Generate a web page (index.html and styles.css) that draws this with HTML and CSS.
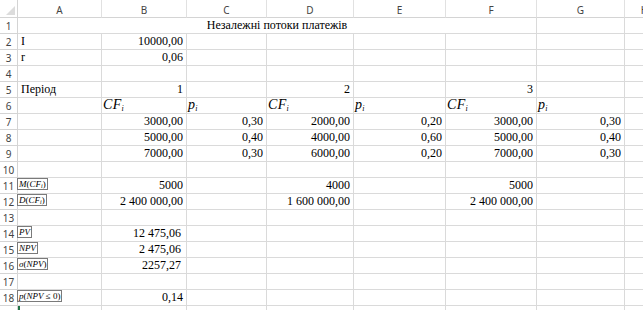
FILE: index.html
```html
<!DOCTYPE html>
<html lang="uk">
<head>
<meta charset="utf-8">
<title>Незалежні потоки платежів</title>
<link rel="stylesheet" href="styles.css">
</head>
<body>
<div class="sheet">
  <div class="hd corner"><span class="tri"></span></div>
  <div class="hd col">A</div><div class="hd col">B</div><div class="hd col">C</div><div class="hd col">D</div><div class="hd col">E</div><div class="hd col">F</div><div class="hd col">G</div><div class="hd col last">H</div>

  <div class="hd rn">1</div>
  <div class="c title">Незалежні потоки платежів</div><div class="c"></div><div class="c"></div>

  <div class="hd rn">2</div>
  <div class="c">I</div><div class="c n">10000,00</div><div class="c"></div><div class="c"></div><div class="c"></div><div class="c"></div><div class="c"></div><div class="c"></div>

  <div class="hd rn">3</div>
  <div class="c">r</div><div class="c n">0,06</div><div class="c"></div><div class="c"></div><div class="c"></div><div class="c"></div><div class="c"></div><div class="c"></div>

  <div class="hd rn">4</div>
  <div class="c"></div><div class="c"></div><div class="c"></div><div class="c"></div><div class="c"></div><div class="c"></div><div class="c"></div><div class="c"></div>

  <div class="hd rn">5</div>
  <div class="c">Період</div><div class="c n">1</div><div class="c"></div><div class="c n">2</div><div class="c"></div><div class="c n">3</div><div class="c"></div><div class="c"></div>

  <div class="hd rn">6</div>
  <div class="c"></div>
  <div class="c m"><i>CF</i><sub>i</sub></div><div class="c m"><i>p</i><sub>i</sub></div>
  <div class="c m"><i>CF</i><sub>i</sub></div><div class="c m"><i>p</i><sub>i</sub></div>
  <div class="c m"><i>CF</i><sub>i</sub></div><div class="c m"><i>p</i><sub>i</sub></div>
  <div class="c"></div>

  <div class="hd rn">7</div>
  <div class="c"></div><div class="c n">3000,00</div><div class="c n">0,30</div><div class="c n">2000,00</div><div class="c n">0,20</div><div class="c n">3000,00</div><div class="c n">0,30</div><div class="c"></div>

  <div class="hd rn">8</div>
  <div class="c"></div><div class="c n">5000,00</div><div class="c n">0,40</div><div class="c n">4000,00</div><div class="c n">0,60</div><div class="c n">5000,00</div><div class="c n">0,40</div><div class="c"></div>

  <div class="hd rn">9</div>
  <div class="c"></div><div class="c n">7000,00</div><div class="c n">0,30</div><div class="c n">6000,00</div><div class="c n">0,20</div><div class="c n">7000,00</div><div class="c n">0,30</div><div class="c"></div>

  <div class="hd rn">10</div>
  <div class="c"></div><div class="c"></div><div class="c"></div><div class="c"></div><div class="c"></div><div class="c"></div><div class="c"></div><div class="c"></div>

  <div class="hd rn">11</div>
  <div class="c f"><span class="box"><i>M</i>(<i>CF</i><sub>i</sub>)</span></div><div class="c n">5000</div><div class="c"></div><div class="c n">4000</div><div class="c"></div><div class="c n">5000</div><div class="c"></div><div class="c"></div>

  <div class="hd rn">12</div>
  <div class="c f"><span class="box"><i>D</i>(<i>CF</i><sub>i</sub>)</span></div><div class="c n">2 400 000,00</div><div class="c"></div><div class="c n">1 600 000,00</div><div class="c"></div><div class="c n">2 400 000,00</div><div class="c"></div><div class="c"></div>

  <div class="hd rn">13</div>
  <div class="c"></div><div class="c"></div><div class="c"></div><div class="c"></div><div class="c"></div><div class="c"></div><div class="c"></div><div class="c"></div>

  <div class="hd rn">14</div>
  <div class="c f"><span class="box"><i>PV</i></span></div><div class="c n sp">12 475,06</div><div class="c"></div><div class="c"></div><div class="c"></div><div class="c"></div><div class="c"></div><div class="c"></div>

  <div class="hd rn">15</div>
  <div class="c f"><span class="box"><i>NPV</i></span></div><div class="c n sp">2 475,06</div><div class="c"></div><div class="c"></div><div class="c"></div><div class="c"></div><div class="c"></div><div class="c"></div>

  <div class="hd rn">16</div>
  <div class="c f"><span class="box"><i>σ</i>(<i>NPV</i>)</span></div><div class="c n sp">2257,27</div><div class="c"></div><div class="c"></div><div class="c"></div><div class="c"></div><div class="c"></div><div class="c"></div>

  <div class="hd rn">17</div>
  <div class="c"></div><div class="c"></div><div class="c"></div><div class="c"></div><div class="c"></div><div class="c"></div><div class="c"></div><div class="c"></div>

  <div class="hd rn">18</div>
  <div class="c f"><span class="box"><i>p</i>(<i>NPV</i> ≤ 0)</span></div><div class="c n">0,14</div><div class="c"></div><div class="c"></div><div class="c"></div><div class="c"></div><div class="c"></div><div class="c"></div>

  <div class="hd rn"></div>
  <div class="c sel"></div><div class="c"></div><div class="c"></div><div class="c"></div><div class="c"></div><div class="c"></div><div class="c"></div><div class="c"></div>
</div>
</body>
</html>
```

FILE: styles.css
```css
* { box-sizing: border-box; }
html, body { margin: 0; padding: 0; background: #fff; overflow: hidden; }
.sheet {
  display: grid;
  grid-template-columns: 18px 84px 85px 80px 87px 92px 91px 88px 40px;
  grid-template-rows: 18px repeat(19, 16px);
  width: 665px;
  font-family: "Liberation Serif", "Times New Roman", serif;
  font-size: 12px;
  color: #000;
}
.hd {
  background: #fff;
  color: #444;
  font-family: "Noto Sans", "DejaVu Sans", sans-serif;
  font-size: 10px;
  border-right: 1px solid #d4d4d4;
  border-bottom: 1px solid #d4d4d4;
  display: flex;
  align-items: center;
  justify-content: center;
}
.col { padding-top: 2px; border-right-color: #e1e1e1; }
.rn { padding-top: 1px; }
.corner { position: relative; border-right-color: #d4d4d4; }
.tri {
  position: absolute;
  right: 2px;
  bottom: 2px;
  width: 0;
  height: 0;
  border-left: 9px solid transparent;
  border-bottom: 9px solid #dcdcdc;
}
.c {
  border-right: 1px solid #dadada;
  border-bottom: 1px solid #dadada;
  line-height: 15px;
  padding: 0 3px;
  white-space: nowrap;
  overflow: visible;
}
.n { text-align: right; padding-right: 3px; }
.sp { padding-right: 5px; }
.title {
  grid-column: 2 / 8;
  text-align: center;
}
.m {
  font-size: 14px;
  line-height: 12px;
  padding-left: 1px;
  padding-top: 1px;
}
.m i { letter-spacing: 0.3px; }
.m sub { font-size: 8px; font-style: italic; vertical-align: -2px; }
.f { padding: 0; margin-left: -1px; }
.box {
  display: inline-block;
  border: 1px solid #7a7a7a;
  font-size: 9px;
  line-height: 10px;
  height: 12px;
  padding: 0 1px 0 1px;
  background: #fff;
  vertical-align: top;
}
.box sub { font-size: 6px; font-style: italic; vertical-align: -1px; }
.sel { box-shadow: inset 2px 0 0 #217346; }
```
